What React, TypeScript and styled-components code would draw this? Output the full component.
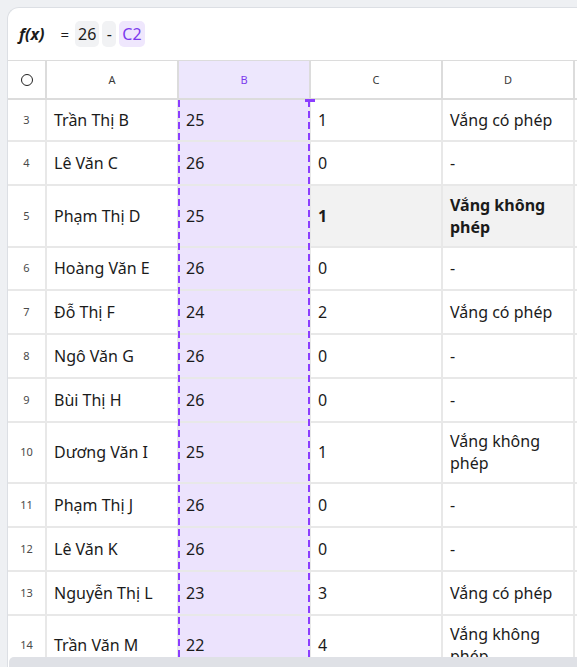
import React from 'react';
import styled, { createGlobalStyle } from 'styled-components';

const Global = createGlobalStyle`
  html, body { margin: 0; padding: 0; background: #eef0f3; overflow: hidden; }
  body { font-family: "Noto Sans", "Open Sans", sans-serif; color: #1b1b1b; }
`;

const Page = styled.div`
  height: 667px;
  box-sizing: border-box;
  padding: 7px 0 0 7px;
  overflow: hidden;
`;

const Card = styled.div`
  width: 720px;
  height: 660px;
  box-sizing: border-box;
  background: #fff;
  border-top: 1px solid #dcdfe4;
  border-left: 1px solid #dcdfe4;
  border-top-left-radius: 12px;
  display: flex;
  flex-direction: column;
  overflow: hidden;
`;

const Toolbar = styled.div`
  height: 52px;
  flex: none;
  display: flex;
  align-items: center;
  padding-left: 11px;
`;

const Fx = styled.span`
  font-weight: 700;
  font-style: italic;
  font-size: 16px;
  margin-right: 16px;
`;

const Eq = styled.span`
  font-size: 15px;
  margin-right: 6px;
`;

const Chip = styled.span<{ $ref?: boolean }>`
  height: 26px;
  min-width: 14px;
  box-sizing: border-box;
  padding: 0 3px;
  margin-right: 3px;
  border-radius: 5px;
  display: inline-flex;
  align-items: center;
  justify-content: center;
  font-size: 16px;
  background: ${(p) => (p.$ref ? '#efe7fd' : '#f1f2f4')};
  color: ${(p) => (p.$ref ? '#7c3aed' : '#1b1b1b')};
`;

const Viewport = styled.div`
  position: relative;
  flex: 1;
  overflow: hidden;
`;

const COLS = '39px repeat(5, 132px)';

const HeaderRow = styled.div`
  display: grid;
  grid-template-columns: ${COLS};
  border-top: 1px solid #dcdcdc;
`;

const HeadCell = styled.div<{ $active?: boolean }>`
  height: 39px;
  box-sizing: border-box;
  border-right: 2px solid #dcdcdc;
  border-bottom: 2px solid #dcdcdc;
  display: flex;
  align-items: center;
  justify-content: center;
  font-size: 11px;
  color: ${(p) => (p.$active ? '#7c3aed' : '#3a3a3a')};
  background: ${(p) => (p.$active ? '#ede7fd' : '#fff')};
`;

const Circle = styled.span`
  width: 10px;
  height: 10px;
  border: 1.5px solid #222;
  border-radius: 50%;
`;

const Row = styled.div`
  display: grid;
  grid-template-columns: ${COLS};
`;

const Cell = styled.div<{ $short?: boolean; $sel?: boolean; $hl?: boolean }>`
  min-height: ${(p) => (p.$short ? 42 : 43.75)}px;
  box-sizing: border-box;
  padding: 7.875px 8px 7.875px 7px;
  border-right: 2px solid #e8e8e8;
  border-bottom: 2px solid #e8e8e8;
  display: flex;
  align-items: center;
  font-size: 16px;
  line-height: 22px;
  font-weight: ${(p) => (p.$hl ? 700 : 400)};
  background: ${(p) => (p.$sel ? '#ece3fd' : p.$hl ? '#f2f2f2' : '#fff')};
`;

const NumCell = styled(Cell)`
  justify-content: center;
  padding-left: 0;
  padding-right: 0;
  font-size: 11px;
  color: #4a4a4a;
  font-weight: 400;
  background: #fff;
`;

const Selection = styled.div`
  position: absolute;
  top: 40px;
  left: 170px;
  width: 132px;
  bottom: 0;
  pointer-events: none;
  background:
    repeating-linear-gradient(to bottom, #8b3dff 0 7px, transparent 7px 11px) left top / 2px 100% no-repeat,
    repeating-linear-gradient(to bottom, #8b3dff 0 7px, transparent 7px 11px) right top / 2px 100% no-repeat;
  &::after {
    content: '';
    position: absolute;
    top: -1px;
    right: -5px;
    width: 10px;
    height: 3px;
    background: #8b3dff;
  }
`;

const Scrollbar = styled.div`
  height: 10px;
  flex: none;
  margin-left: 1px;
  background: #dfe1e6;
  border-top-left-radius: 5px;
`;

type R = { n: number; a: string; b: number; c: number; d: string; hl?: boolean };

const rows: R[] = [
  { n: 3, a: 'Trần Thị B', b: 25, c: 1, d: 'Vắng có phép' },
  { n: 4, a: 'Lê Văn C', b: 26, c: 0, d: '-' },
  { n: 5, a: 'Phạm Thị D', b: 25, c: 1, d: 'Vắng không phép', hl: true },
  { n: 6, a: 'Hoàng Văn E', b: 26, c: 0, d: '-' },
  { n: 7, a: 'Đỗ Thị F', b: 24, c: 2, d: 'Vắng có phép' },
  { n: 8, a: 'Ngô Văn G', b: 26, c: 0, d: '-' },
  { n: 9, a: 'Bùi Thị H', b: 26, c: 0, d: '-' },
  { n: 10, a: 'Dương Văn I', b: 25, c: 1, d: 'Vắng không phép' },
  { n: 11, a: 'Phạm Thị J', b: 26, c: 0, d: '-' },
  { n: 12, a: 'Lê Văn K', b: 26, c: 0, d: '-' },
  { n: 13, a: 'Nguyễn Thị L', b: 23, c: 3, d: 'Vắng có phép' },
  { n: 14, a: 'Trần Văn M', b: 22, c: 4, d: 'Vắng không phép' },
];

export default function App() {
  return (
    <Page>
      <Global />
      <Card>
        <Toolbar>
          <Fx>f(x)</Fx>
          <Eq>=</Eq>
          <Chip>26</Chip>
          <Chip>-</Chip>
          <Chip $ref>C2</Chip>
        </Toolbar>
        <Viewport>
          <HeaderRow>
            <HeadCell><Circle /></HeadCell>
            <HeadCell>A</HeadCell>
            <HeadCell $active>B</HeadCell>
            <HeadCell>C</HeadCell>
            <HeadCell>D</HeadCell>
            <HeadCell />
          </HeaderRow>
          {rows.map((r, i) => (
            <Row key={r.n}>
              <NumCell $short={i === 0}>{r.n}</NumCell>
              <Cell $short={i === 0}>{r.a}</Cell>
              <Cell $short={i === 0} $sel>{r.b}</Cell>
              <Cell $short={i === 0} $hl={r.hl}>{r.c}</Cell>
              <Cell $short={i === 0} $hl={r.hl}>{r.d}</Cell>
              <Cell $short={i === 0}></Cell>
            </Row>
          ))}
          <Selection />
        </Viewport>
        <Scrollbar />
      </Card>
    </Page>
  );
}
